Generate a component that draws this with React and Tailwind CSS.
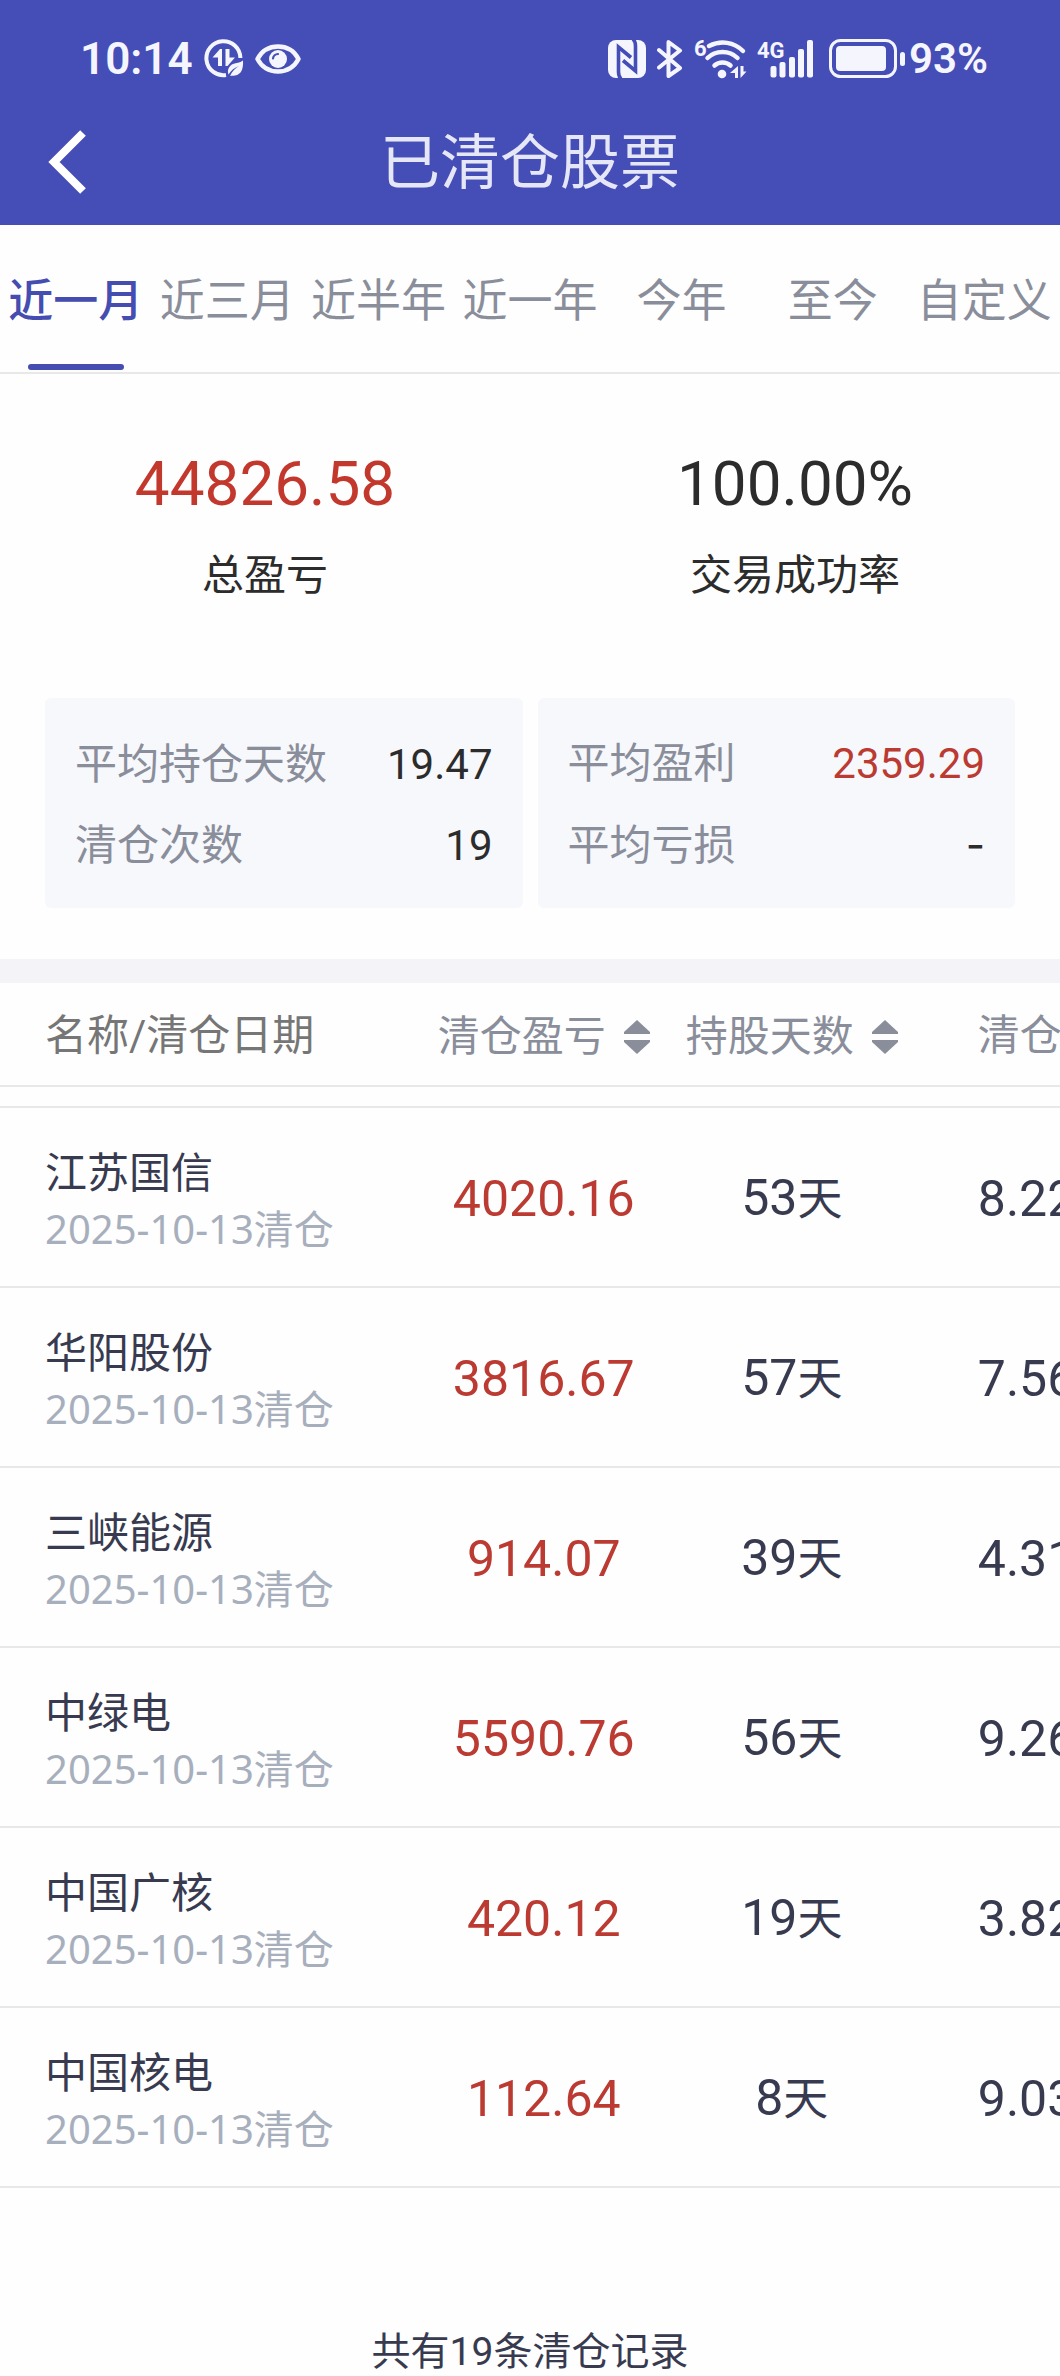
import { useState } from 'react';

const tabs = ['近一月', '近三月', '近半年', '近一年', '今年', '至今', '自定义'];

const stocks = [
  { name: '江苏国信', date: '2025-10-13', profit: '4020.16', days: 53, price: '8.22' },
  { name: '华阳股份', date: '2025-10-13', profit: '3816.67', days: 57, price: '7.56' },
  { name: '三峡能源', date: '2025-10-13', profit: '914.07', days: 39, price: '4.31' },
  { name: '中绿电', date: '2025-10-13', profit: '5590.76', days: 56, price: '9.26' },
  { name: '中国广核', date: '2025-10-13', profit: '420.12', days: 19, price: '3.82' },
  { name: '中国核电', date: '2025-10-13', profit: '112.64', days: 8, price: '9.03' },
];

function DataSaverIcon() {
  return (
    <svg width="40" height="40" viewBox="0 0 40 40" fill="none" aria-hidden>
      <path d="M36.4 19A17 17 0 1 0 22 36" stroke="currentColor" strokeWidth="4" />
      <path d="M18 10v17h-4v-8.500H8.500L16 10z" fill="currentColor" />
      <path d="M21.500 10h4v8.500h5.500L23.500 27h-2z" fill="currentColor" />
      <path d="M39 21.500c.5 8-1.500 14-8 15-2 .4-3.500 0-5 .5 2-4.500 5.500-8 9-10-4.500 1.500-8 4.500-10.500 8.500-1.500-4 0-8.500 4.500-10.500 3.500-1.500 6.500-1 10-3.500z" fill="currentColor" />
    </svg>
  );
}

function EyeIcon() {
  return (
    <svg width="46" height="32" viewBox="0 0 46 32" fill="none" aria-hidden>
      <path d="M2.500 16C7 7.500 14.500 3.500 23 3.500S39 7.500 43.500 16C39 24.500 31.500 28.500 23 28.500S7 24.500 2.500 16z" stroke="currentColor" strokeWidth="4.500" strokeLinejoin="round" />
      <circle cx="23" cy="16" r="9" fill="currentColor" />
      <path d="M18 15.500a5 5 0 0 1 5-4.500" stroke="#454db6" strokeWidth="2.200" strokeLinecap="round" />
    </svg>
  );
}

function NfcIcon() {
  return (
    <svg width="38" height="38" viewBox="0 0 38 38" fill="none" aria-hidden>
      <rect width="38" height="38" rx="8" fill="currentColor" />
      <path d="M13 39c-2-2-2.500-4-2.500-7V7L23 17.500" stroke="#454db6" strokeWidth="3.600" />
      <path d="M25 -1c2 2 2.500 4 2.500 7v25L15 20.500" stroke="#454db6" strokeWidth="3.600" />
    </svg>
  );
}

function BluetoothIcon() {
  return (
    <svg width="26" height="38" viewBox="0 0 26 38" fill="none" aria-hidden>
      <path d="M2 10l21 18-11.500 8V2L23 10.500 2 27.500" stroke="currentColor" strokeWidth="4" strokeLinejoin="round" strokeLinecap="round" />
    </svg>
  );
}

function WifiIcon() {
  return (
    <svg width="52" height="40" viewBox="0 0 52 40" fill="none" className="overflow-visible" aria-hidden>
      <text x="0" y="17" fontSize="22" fontWeight="700" fill="currentColor">6</text>
      <path d="M15 7c12-6 25-4 34 5" stroke="currentColor" strokeWidth="4.500" strokeLinecap="round" />
      <path d="M13.500 19c8-8 22-8 30 0" stroke="currentColor" strokeWidth="4.500" strokeLinecap="round" />
      <path d="M20.500 26.500c4.500-4 11.500-4 16 0" stroke="currentColor" strokeWidth="4.500" strokeLinecap="round" />
      <circle cx="28" cy="35" r="4.300" fill="currentColor" />
      <path d="M44 27v12h-3v-5h-5z M46.500 27v12l6-6.500h-3V27z" fill="currentColor" />
    </svg>
  );
}

function SignalIcon() {
  return (
    <svg width="57" height="40" viewBox="0 0 57 40" fill="currentColor" className="overflow-visible" aria-hidden>
      <text x="0" y="19" fontSize="22" fontWeight="700">4G</text>
      <rect x="13.500" y="27" width="6" height="11.500" rx="2" />
      <rect x="22.500" y="23" width="6" height="15.500" rx="2" />
      <rect x="32" y="18" width="6" height="20.500" rx="2" />
      <rect x="41" y="10" width="6" height="28.500" rx="2" />
      <rect x="50" y="1" width="6" height="37.500" rx="2" />
    </svg>
  );
}

function BatteryIcon() {
  return (
    <svg width="76" height="40" viewBox="0 0 76 40" fill="none" aria-hidden>
      <rect x="1.500" y="1.500" width="65" height="36" rx="10" stroke="currentColor" strokeWidth="3" />
      <rect x="7" y="7" width="50" height="25" rx="4" fill="currentColor" />
      <rect x="71" y="13" width="5" height="14" rx="2.500" fill="currentColor" />
    </svg>
  );
}

function SortIcon() {
  return (
    <svg width="26" height="34" viewBox="0 0 26 34" fill="currentColor" aria-hidden>
      <path d="M13 0l13 12v2H0v-2z" />
      <path d="M0 20h26v2L13 34 0 22z" />
    </svg>
  );
}

function StatRow({ label, value, red }) {
  return (
    <div className="flex items-center justify-between text-[42px] leading-[60px]">
      <dt className="text-[#8a8e9b]">{label}</dt>
      <dd className={red ? 'text-[#bb3a32]' : 'text-[#2c2c2c]'}>{value}</dd>
    </div>
  );
}

function SortHeader({ children }) {
  return (
    <th scope="col" className="h-[104px] border-b-2 border-[#e8e8e9] p-0 pt-1 font-normal">
      <button type="button" className="inline-flex items-center gap-[18px] whitespace-nowrap align-middle">
        {children}
        <SortIcon />
      </button>
    </th>
  );
}

export default function App() {
  const [active, setActive] = useState(0);

  return (
    <div className="w-full overflow-hidden bg-[#fefefe] font-[Roboto,'Noto_Sans_CJK_SC',sans-serif] text-[#2c2c2c]">
      <header className="bg-[#454db6]">
        {/* Status bar */}
        <div className="flex h-[104px] items-center justify-between pt-[14px] pr-[72px] pl-[80px] text-[#f5f5fe]">
          <div className="flex items-center gap-[11px]">
            <time className="text-[44px] leading-[52px] font-semibold">10:14</time>
            <DataSaverIcon />
            <EyeIcon />
          </div>
          <div className="flex items-center gap-[11px]">
            <NfcIcon />
            <BluetoothIcon />
            <WifiIcon />
            <SignalIcon />
            <div className="flex items-center gap-1 pl-1">
              <BatteryIcon />
              <span className="text-[42px] leading-[52px] font-semibold">93%</span>
            </div>
          </div>
        </div>

        {/* Title bar */}
        <div className="grid h-[121px] grid-cols-[1fr_auto_1fr] items-start px-12 pt-[26px]">
          <button type="button" aria-label="返回" className="w-10 text-white">
            <svg width="38" height="64" viewBox="0 0 38 64" fill="none" aria-hidden>
              <path d="M35 3L6 32l29 29" stroke="currentColor" strokeWidth="8" />
            </svg>
          </button>
          <h1 className="text-[60px] leading-[68px] text-[#e6e7f6]">已清仓股票</h1>
        </div>
      </header>

      <nav className="grid h-[149px] grid-cols-7 border-b-2 border-[#e8e8e9]">
        {tabs.map((tab, i) => (
          <button
            key={tab}
            type="button"
            onClick={() => setActive(i)}
            className={`flex flex-col items-center justify-between pt-[45px] pb-[2px] text-[45px] leading-[64px] whitespace-nowrap ${
              i === active ? 'font-medium text-[#454db0]' : 'text-[#8a8e9b]'
            }`}
          >
            {tab}
            <span className={`h-[6px] w-24 rounded-full ${i === active ? 'bg-[#454db0]' : 'bg-transparent'}`} />
          </button>
        ))}
      </nav>

      <section className="grid grid-cols-2 pt-[70px] text-center">
        <div>
          <p className="text-[62px] leading-[80px] text-[#c3382d]">44826.58</p>
          <p className="mt-[22px] text-[42px] leading-[60px]">总盈亏</p>
        </div>
        <div>
          <p className="text-[62px] leading-[80px]">100.00%</p>
          <p className="mt-[22px] text-[42px] leading-[60px]">交易成功率</p>
        </div>
      </section>

      <section className="grid grid-cols-2 gap-[15px] px-[45px] pt-[92px] pb-[51px]">
        <dl className="flex h-[210px] flex-col justify-center gap-[21px] rounded-md bg-[#f7f8fc] px-[30px] pt-1">
          <StatRow label="平均持仓天数" value="19.47" />
          <StatRow label="清仓次数" value="19" />
        </dl>
        <dl className="flex h-[210px] flex-col justify-center gap-[21px] rounded-md bg-[#f7f8fc] px-[30px] pt-1">
          <StatRow label="平均盈利" value="2359.29" red />
          <StatRow label="平均亏损" value={<span className="font-[Inter,sans-serif]">-</span>} />
        </dl>
      </section>

      <section className="border-t-[24px] border-[#f3f3f8]">
        <table className="w-full table-fixed border-separate border-spacing-0">
          <colgroup>
            <col className="w-[39.6%]" />
            <col className="w-[23.4%]" />
            <col className="w-[23.4%]" />
            <col />
          </colgroup>
          <thead className="text-[42px] leading-[60px] text-[#8a8e9b]">
            <tr>
              <th scope="col" className="border-b-2 border-[#e8e8e9] p-0 pt-1 pl-[45px] text-left font-normal text-[#767676]">
                名称/清仓日期
              </th>
              <SortHeader>清仓盈亏</SortHeader>
              <SortHeader>持股天数</SortHeader>
              <th scope="col" className="overflow-hidden border-b-2 border-[#e8e8e9] p-0 pt-1 pl-[62px] text-left font-normal whitespace-nowrap">
                清仓
              </th>
            </tr>
            <tr aria-hidden>
              <td colSpan={4} className="h-[21px] border-b-2 border-[#e8e8e9] p-0" />
            </tr>
          </thead>
          <tbody className="text-[#383b50]">
            {stocks.map((stock) => (
              <tr key={stock.name} className="text-center text-[50px] leading-[60px]">
                <th scope="row" className="h-[180px] border-b-2 border-[#e8e8e9] p-0 pt-2 pl-[45px] text-left font-normal">
                  <div className="text-[42px] leading-[56px]">{stock.name}</div>
                  <div className="font-['Noto_Sans','Noto_Sans_CJK_SC',sans-serif] text-[40px] leading-[54px] text-[#a7afbd]">
                    {stock.date}清仓
                  </div>
                </th>
                <td className="border-b-2 border-[#e8e8e9] p-0 pt-1 text-[#bb3a32]">{stock.profit}</td>
                <td className="border-b-2 border-[#e8e8e9] p-0 pt-1">
                  {stock.days}
                  <span className="text-[45px]">天</span>
                </td>
                <td className="overflow-hidden border-b-2 border-[#e8e8e9] p-0 pt-1 pl-[62px] text-left whitespace-nowrap">
                  {stock.price}
                </td>
              </tr>
            ))}
          </tbody>
        </table>
      </section>

      <footer className="pt-[140px] text-center text-[39px] leading-[48px] text-[#383b50]">
        共有19条清仓记录
      </footer>
    </div>
  );
}
